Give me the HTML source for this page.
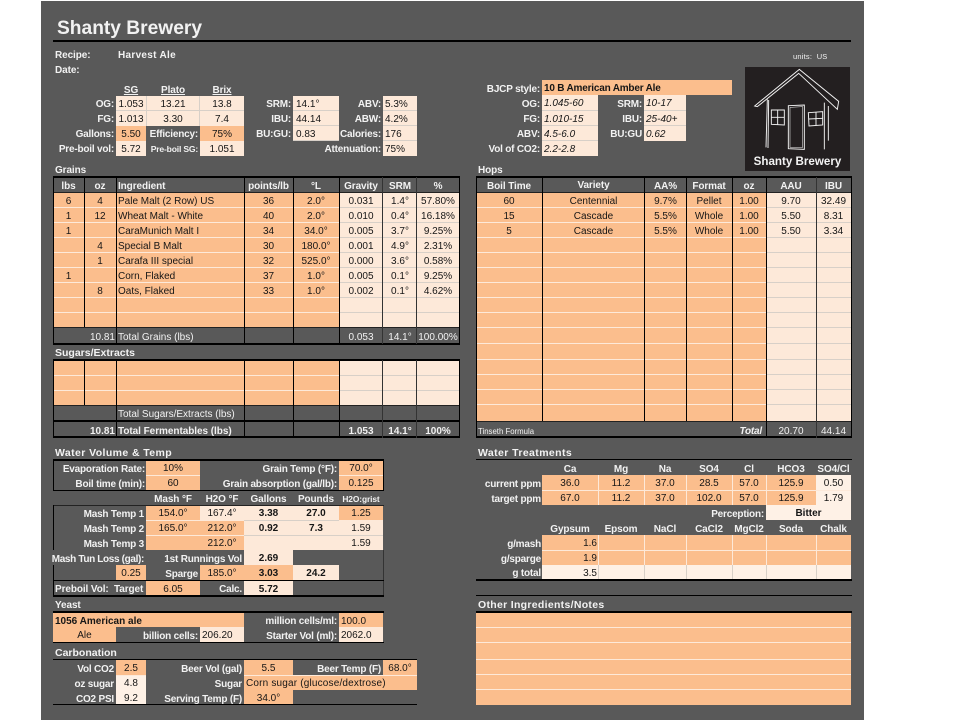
<!DOCTYPE html>
<html><head><meta charset="utf-8"><title>Shanty Brewery</title>
<style>
html,body{margin:0;padding:0;background:#fff;width:960px;height:720px;overflow:hidden}
#g{position:absolute;left:41px;top:1px;width:823px;height:719px;background:#595959}
#a{position:absolute;left:0;top:0;width:960px;height:720px;font:10px/15px "Liberation Sans",sans-serif;color:#161616}
#a p{position:absolute;margin:0;padding:1px 0 0;height:15px;line-height:15px;text-align:center;white-space:nowrap;box-sizing:border-box}
#a p.o{background:#fbbe8d}
#a p.l{background:#fde9d9}
#a p.x{background:#fef1e6}
#a p.w{left:0;text-align:right;color:#f2f2f2;font-weight:bold;letter-spacing:-.2px}
#a p.t{text-align:left;color:#f2f2f2;font-weight:bold;letter-spacing:-.1px}
#a p.h{text-align:left;color:#f2f2f2;font-weight:bold;font-size:10.5px}
#a p.n{text-align:left}
#a p.v{color:#f2f2f2}
#a p.b{font-weight:bold}
#a p.i{font-style:italic}
#a u{position:absolute;display:block;text-decoration:none;background:#000}
#a u.s{background:#fde9d9;height:1px}
#a u.q{background:#d8d0c8}
</style></head><body>
<div id="g"></div>
<div id="a">

<!-- Header -->
<p class="h" style="left:57px;top:16px;height:24px;line-height:24px;font-size:19.2px">Shanty Brewery</p>
<u style="left:53px;top:40px;width:798px;height:2px"></u>
<p class="t" style="left:55px;top:47px">Recipe:</p>
<p class="t" style="left:118px;top:47px;letter-spacing:.3px">Harvest Ale</p>
<p class="t" style="left:55px;top:62px">Date:</p>
<p class="v" style="left:793px;top:48px;font-size:7.5px;text-align:left;letter-spacing:.2px">units:&nbsp; US</p>

<!-- Top stats -->
<p class="t" style="left:116px;top:82px;width:30px;text-align:center;text-decoration:underline">SG</p>
<p class="t" style="left:146px;top:82px;width:54px;text-align:center;text-decoration:underline">Plato</p>
<p class="t" style="left:200px;top:82px;width:44px;text-align:center;text-decoration:underline">Brix</p>

<p class="w" style="top:96px;width:114px">OG:</p>
<p class="w" style="top:111px;width:114px">FG:</p>
<p class="w" style="top:126px;width:114px">Gallons:</p>
<p class="w" style="top:141px;width:114px">Pre-boil vol:</p>
<p class="l" style="left:116px;top:96px;width:30px">1.053</p>
<p class="l" style="left:146px;top:96px;width:54px">13.21</p>
<p class="l" style="left:200px;top:96px;width:44px">13.8</p>
<p class="l" style="left:116px;top:111px;width:30px">1.013</p>
<p class="l" style="left:146px;top:111px;width:54px">3.30</p>
<p class="l" style="left:200px;top:111px;width:44px">7.4</p>
<p class="o" style="left:116px;top:126px;width:30px">5.50</p>
<p class="w" style="top:126px;width:198px">Efficiency:</p>
<p class="o" style="left:200px;top:126px;width:44px">75%</p>
<p class="l" style="left:116px;top:141px;width:30px">5.72</p>
<p class="w" style="top:141px;width:198px;font-size:8.6px">Pre-boil SG:</p>
<p class="l" style="left:200px;top:141px;width:44px">1.051</p>
<u class="q" style="left:116px;top:110px;width:128px;height:1px"></u>
<u class="q" style="left:199px;top:96px;width:1px;height:30px"></u>
<u class="q" style="left:146px;top:96px;width:1px;height:30px"></u>

<p class="w" style="top:96px;width:291px">SRM:</p>
<p class="w" style="top:111px;width:291px">IBU:</p>
<p class="w" style="top:126px;width:291px">BU:GU:</p>
<p class="l n" style="left:293px;top:96px;width:46px;padding-left:3px">14.1°</p>
<p class="l n" style="left:293px;top:111px;width:46px;padding-left:3px">44.14</p>
<p class="l n" style="left:293px;top:126px;width:46px;padding-left:3px">0.83</p>
<u class="q" style="left:293px;top:110px;width:46px;height:1px"></u>
<u class="q" style="left:293px;top:125px;width:46px;height:1px"></u>
<u class="q" style="left:293px;top:140px;width:46px;height:1px"></u>

<p class="w" style="top:96px;width:381px">ABV:</p>
<p class="w" style="top:111px;width:381px">ABW:</p>
<p class="w" style="top:126px;width:381px">Calories:</p>
<p class="w" style="top:141px;width:381px">Attenuation:</p>
<p class="l n" style="left:383px;top:96px;width:34px;padding-left:2px">5.3%</p>
<p class="l n" style="left:383px;top:111px;width:34px;padding-left:2px">4.2%</p>
<p class="l n" style="left:383px;top:126px;width:34px;padding-left:2px">176</p>
<p class="l n" style="left:383px;top:141px;width:34px;padding-left:2px">75%</p>
<u class="q" style="left:383px;top:110px;width:34px;height:1px"></u>
<u class="q" style="left:383px;top:125px;width:34px;height:1px"></u>
<u class="q" style="left:383px;top:140px;width:34px;height:1px"></u>

<!-- BJCP -->
<p class="w" style="top:81px;width:540px">BJCP style:</p>
<p class="o n b" style="left:542px;top:80px;width:190px;padding-left:2px;letter-spacing:-.2px">10 B American Amber Ale</p>
<p class="w" style="top:96px;width:540px">OG:</p>
<p class="w" style="top:111px;width:540px">FG:</p>
<p class="w" style="top:126px;width:540px">ABV:</p>
<p class="w" style="top:141px;width:540px">Vol of CO2:</p>
<p class="l n i" style="left:542px;top:95px;width:56px;padding-left:2px;height:16px">1.045-60</p>
<p class="l n i" style="left:542px;top:111px;width:56px;padding-left:2px">1.010-15</p>
<p class="l n i" style="left:542px;top:126px;width:56px;padding-left:2px">4.5-6.0</p>
<p class="l n i" style="left:542px;top:141px;width:56px;padding-left:2px">2.2-2.8</p>
<p class="w" style="top:96px;width:642px">SRM:</p>
<p class="w" style="top:111px;width:642px">IBU:</p>
<p class="w" style="top:126px;width:642px">BU:GU</p>
<p class="l n i" style="left:644px;top:95px;width:42px;padding-left:2px;height:16px">10-17</p>
<p class="l n i" style="left:644px;top:111px;width:42px;padding-left:2px">25-40+</p>
<p class="l n i" style="left:644px;top:126px;width:42px;padding-left:2px">0.62</p>
<u class="q" style="left:542px;top:110px;width:56px;height:1px"></u>
<u class="q" style="left:542px;top:125px;width:56px;height:1px"></u>
<u class="q" style="left:542px;top:140px;width:56px;height:1px"></u>
<u class="q" style="left:644px;top:110px;width:42px;height:1px"></u>
<u class="q" style="left:644px;top:125px;width:42px;height:1px"></u>

<!-- Logo -->
<u style="left:745px;top:67px;width:105px;height:104px;background:#231f20"></u>
<svg style="position:absolute;left:740px;top:60px" width="120" height="120" viewBox="0 0 360 360" fill="none" stroke="#f4f4f4" stroke-width="2.8" stroke-linejoin="miter">
<path d="M44 138L178 28L296 124L292 148L176 40L52 140Z"/>
<path d="M82 118L78 262M86 120L84 264"/>
<path d="M253 128L253 268M265 138L265 242"/>
<path d="M145 137L193 135L193 268L145 266Z"/>
<path d="M150 142L188 140L188 262L150 262Z" stroke-width="1.6"/>
<path d="M94 150L133 150L133 195L94 193Z"/>
<path d="M113 150L113 194M94 172L133 172"/>
<path d="M205 158L248 155L248 195L207 198Z"/>
<path d="M228 157L228 196M206 177L248 175"/>
</svg>
<p class="h" style="left:745px;top:153px;width:105px;text-align:center;font-size:11.6px">Shanty Brewery</p>

<!-- Grains -->
<p class="t" style="left:55px;top:162px">Grains</p>
<u style="left:53px;top:193px;width:191px;height:134px;background:#fbbe8d"></u>
<u style="left:244px;top:193px;width:95px;height:134px;background:#fbbe8d"></u>
<u style="left:339px;top:193px;width:120px;height:134px;background:#fde9d9"></u>
<u class="s" style="left:53px;top:207px;width:286px"></u>
<u class="s" style="left:53px;top:222px;width:286px"></u>
<u class="s" style="left:53px;top:237px;width:286px"></u>
<u class="s" style="left:53px;top:252px;width:286px"></u>
<u class="s" style="left:53px;top:267px;width:286px"></u>
<u class="s" style="left:53px;top:282px;width:286px"></u>
<u class="s" style="left:53px;top:297px;width:286px"></u>
<u class="s" style="left:53px;top:312px;width:286px"></u>
<u class="q" style="left:339px;top:207px;width:120px;height:1px"></u>
<u class="q" style="left:339px;top:222px;width:120px;height:1px"></u>
<u class="q" style="left:339px;top:237px;width:120px;height:1px"></u>
<u class="q" style="left:339px;top:252px;width:120px;height:1px"></u>
<u class="q" style="left:339px;top:267px;width:120px;height:1px"></u>
<u class="q" style="left:339px;top:282px;width:120px;height:1px"></u>
<u class="q" style="left:339px;top:297px;width:120px;height:1px"></u>
<u class="q" style="left:339px;top:312px;width:120px;height:1px"></u>
<u style="left:53px;top:176px;width:407px;height:2px"></u>
<u style="left:53px;top:192px;width:407px;height:1px;background:#222"></u>
<u style="left:53px;top:327px;width:407px;height:1px;background:#222"></u>
<u style="left:53px;top:343px;width:407px;height:2px"></u>
<u style="left:53px;top:176px;width:1px;height:169px"></u>
<u style="left:84px;top:177px;width:1px;height:150px"></u>
<u style="left:116px;top:177px;width:1px;height:167px"></u>
<u style="left:244px;top:177px;width:1px;height:167px"></u>
<u style="left:293px;top:177px;width:1px;height:167px"></u>
<u style="left:339px;top:177px;width:1px;height:167px"></u>
<u style="left:382px;top:177px;width:1px;height:167px;background:#333"></u>
<u style="left:416px;top:177px;width:1px;height:167px;background:#333"></u>
<u style="left:459px;top:176px;width:1px;height:169px"></u>

<p class="t" style="left:53px;top:178px;width:31px;text-align:center">lbs</p>
<p class="t" style="left:84px;top:178px;width:32px;text-align:center">oz</p>
<p class="t" style="left:118px;top:178px">Ingredient</p>
<p class="t" style="left:244px;top:178px;width:49px;text-align:center">points/lb</p>
<p class="t" style="left:293px;top:178px;width:46px;text-align:center">°L</p>
<p class="t" style="left:339px;top:178px;width:44px;text-align:center">Gravity</p>
<p class="t" style="left:383px;top:178px;width:34px;text-align:center">SRM</p>
<p class="t" style="left:417px;top:178px;width:42px;text-align:center">%</p>

<p style="left:53px;top:193px;width:31px">6</p><p style="left:84px;top:193px;width:32px">4</p><p class="n" style="left:118px;top:193px">Pale Malt (2 Row) US</p><p style="left:244px;top:193px;width:49px">36</p><p style="left:293px;top:193px;width:46px">2.0°</p><p style="left:339px;top:193px;width:44px">0.031</p><p style="left:383px;top:193px;width:34px">1.4°</p><p style="left:417px;top:193px;width:42px">57.80%</p>
<p style="left:53px;top:208px;width:31px">1</p><p style="left:84px;top:208px;width:32px">12</p><p class="n" style="left:118px;top:208px">Wheat Malt - White</p><p style="left:244px;top:208px;width:49px">40</p><p style="left:293px;top:208px;width:46px">2.0°</p><p style="left:339px;top:208px;width:44px">0.010</p><p style="left:383px;top:208px;width:34px">0.4°</p><p style="left:417px;top:208px;width:42px">16.18%</p>
<p style="left:53px;top:223px;width:31px">1</p><p class="n" style="left:118px;top:223px">CaraMunich Malt I</p><p style="left:244px;top:223px;width:49px">34</p><p style="left:293px;top:223px;width:46px">34.0°</p><p style="left:339px;top:223px;width:44px">0.005</p><p style="left:383px;top:223px;width:34px">3.7°</p><p style="left:417px;top:223px;width:42px">9.25%</p>
<p style="left:84px;top:238px;width:32px">4</p><p class="n" style="left:118px;top:238px">Special B Malt</p><p style="left:244px;top:238px;width:49px">30</p><p style="left:293px;top:238px;width:46px">180.0°</p><p style="left:339px;top:238px;width:44px">0.001</p><p style="left:383px;top:238px;width:34px">4.9°</p><p style="left:417px;top:238px;width:42px">2.31%</p>
<p style="left:84px;top:253px;width:32px">1</p><p class="n" style="left:118px;top:253px">Carafa III special</p><p style="left:244px;top:253px;width:49px">32</p><p style="left:293px;top:253px;width:46px">525.0°</p><p style="left:339px;top:253px;width:44px">0.000</p><p style="left:383px;top:253px;width:34px">3.6°</p><p style="left:417px;top:253px;width:42px">0.58%</p>
<p style="left:53px;top:268px;width:31px">1</p><p class="n" style="left:118px;top:268px">Corn, Flaked</p><p style="left:244px;top:268px;width:49px">37</p><p style="left:293px;top:268px;width:46px">1.0°</p><p style="left:339px;top:268px;width:44px">0.005</p><p style="left:383px;top:268px;width:34px">0.1°</p><p style="left:417px;top:268px;width:42px">9.25%</p>
<p style="left:84px;top:283px;width:32px">8</p><p class="n" style="left:118px;top:283px">Oats, Flaked</p><p style="left:244px;top:283px;width:49px">33</p><p style="left:293px;top:283px;width:46px">1.0°</p><p style="left:339px;top:283px;width:44px">0.002</p><p style="left:383px;top:283px;width:34px">0.1°</p><p style="left:417px;top:283px;width:42px">4.62%</p>

<p class="v" style="left:84px;top:329px;width:31px;text-align:right">10.81</p>
<p class="v n" style="left:118px;top:329px">Total Grains (lbs)</p>
<p class="v" style="left:339px;top:329px;width:44px">0.053</p>
<p class="v" style="left:383px;top:329px;width:34px">14.1°</p>
<p class="v" style="left:417px;top:329px;width:42px">100.00%</p>

<!-- Sugars -->
<p class="h" style="left:55px;top:345px">Sugars/Extracts</p>
<u style="left:53px;top:360px;width:286px;height:45px;background:#fbbe8d"></u>
<u style="left:339px;top:360px;width:120px;height:45px;background:#fde9d9"></u>
<u class="s" style="left:53px;top:375px;width:286px"></u>
<u class="s" style="left:53px;top:390px;width:286px"></u>
<u class="q" style="left:339px;top:375px;width:120px;height:1px"></u>
<u class="q" style="left:339px;top:390px;width:120px;height:1px"></u>
<u style="left:53px;top:359px;width:407px;height:2px"></u>
<u style="left:53px;top:405px;width:407px;height:1px;background:#222"></u>
<u style="left:53px;top:420px;width:407px;height:2px"></u>
<u style="left:53px;top:436px;width:407px;height:2px"></u>
<u style="left:53px;top:359px;width:1px;height:79px"></u>
<u style="left:84px;top:360px;width:1px;height:45px"></u>
<u style="left:116px;top:360px;width:1px;height:78px"></u>
<u style="left:244px;top:360px;width:1px;height:78px"></u>
<u style="left:293px;top:360px;width:1px;height:78px"></u>
<u style="left:339px;top:360px;width:1px;height:78px"></u>
<u style="left:382px;top:360px;width:1px;height:78px;background:#333"></u>
<u style="left:416px;top:360px;width:1px;height:78px;background:#333"></u>
<u style="left:459px;top:359px;width:1px;height:79px"></u>
<p class="v n" style="left:118px;top:406px">Total Sugars/Extracts (lbs)</p>
<p class="v b" style="left:84px;top:423px;width:31px;text-align:right">10.81</p>
<p class="v b n" style="left:118px;top:423px;letter-spacing:-.05px">Total Fermentables (lbs)</p>
<p class="v b" style="left:339px;top:423px;width:44px">1.053</p>
<p class="v b" style="left:383px;top:423px;width:34px">14.1°</p>
<p class="v b" style="left:417px;top:423px;width:42px">100%</p>

<!-- Water Volume -->
<p class="h" style="left:55px;top:445px;letter-spacing:.4px">Water Volume &amp; Temp</p>
<p class="o" style="left:146px;top:460px;width:54px">10%</p>
<p class="o" style="left:146px;top:475px;width:54px">60</p>
<p class="o" style="left:339px;top:460px;width:44px">70.0°</p>
<p class="o" style="left:339px;top:475px;width:44px">0.125</p>
<u class="s" style="left:146px;top:475px;width:54px"></u>
<u class="s" style="left:339px;top:475px;width:44px"></u>
<u style="left:53px;top:459px;width:331px;height:2px"></u>
<u style="left:53px;top:490px;width:331px;height:1px"></u>
<u style="left:53px;top:459px;width:1px;height:32px"></u>
<u style="left:383px;top:459px;width:1px;height:32px"></u>
<p class="w" style="top:461px;width:145px">Evaporation Rate:</p>
<p class="w" style="top:476px;width:145px">Boil time (min):</p>
<p class="w" style="top:461px;width:337px">Grain Temp (°F):</p>
<p class="w" style="top:476px;width:337px">Grain absorption (gal/lb):</p>

<p class="t" style="left:146px;top:491px;width:54px;text-align:center">Mash °F</p>
<p class="t" style="left:200px;top:491px;width:44px;text-align:center">H2O °F</p>
<p class="t" style="left:244px;top:491px;width:49px;text-align:center">Gallons</p>
<p class="t" style="left:293px;top:491px;width:46px;text-align:center">Pounds</p>
<p class="t" style="left:339px;top:491px;width:44px;text-align:center;font-size:8.4px">H2O:grist</p>

<p class="o" style="left:146px;top:505px;width:54px">154.0°</p>
<p class="l" style="left:200px;top:505px;width:44px">167.4°</p>
<p class="l b" style="left:244px;top:505px;width:49px">3.38</p>
<p class="l b" style="left:293px;top:505px;width:46px">27.0</p>
<p class="o" style="left:339px;top:505px;width:44px">1.25</p>
<p class="o" style="left:146px;top:520px;width:54px">165.0°</p>
<p class="o" style="left:200px;top:520px;width:44px">212.0°</p>
<p class="l b" style="left:244px;top:520px;width:49px">0.92</p>
<p class="l b" style="left:293px;top:520px;width:46px">7.3</p>
<p class="l" style="left:339px;top:520px;width:44px">1.59</p>
<p class="o" style="left:146px;top:535px;width:54px"></p>
<p class="o" style="left:200px;top:535px;width:44px">212.0°</p>
<p class="l" style="left:244px;top:535px;width:49px"></p>
<p class="l" style="left:293px;top:535px;width:46px"></p>
<p class="l" style="left:339px;top:535px;width:44px">1.59</p>
<u class="s" style="left:146px;top:520px;width:98px"></u>
<u class="s" style="left:146px;top:535px;width:98px"></u>
<u class="q" style="left:244px;top:520px;width:95px;height:1px"></u>
<u class="q" style="left:244px;top:535px;width:95px;height:1px"></u>
<u class="q" style="left:339px;top:535px;width:44px;height:1px"></u>
<u style="left:53px;top:505px;width:331px;height:1px;background:#222"></u>
<u style="left:53px;top:505px;width:1px;height:45px"></u>
<p class="w" style="top:506px;width:144px">Mash Temp 1</p>
<p class="w" style="top:521px;width:144px">Mash Temp 2</p>
<p class="w" style="top:536px;width:144px">Mash Temp 3</p>

<p class="w" style="top:551px;width:144px;letter-spacing:-.35px">Mash Tun Loss (gal):</p>
<p class="w" style="top:551px;width:242px">1st Runnings Vol</p>
<p class="l b" style="left:244px;top:550px;width:49px">2.69</p>
<p class="o" style="left:116px;top:565px;width:30px">0.25</p>
<p class="w" style="top:566px;width:198px">Sparge</p>
<p class="o" style="left:200px;top:565px;width:44px">185.0°</p>
<p class="o b" style="left:244px;top:565px;width:49px">3.03</p>
<p class="l b" style="left:293px;top:565px;width:46px">24.2</p>
<u style="left:53px;top:565px;width:1px;height:31px"></u>
<u style="left:383px;top:550px;width:1px;height:46px;background:#333"></u>
<u style="left:53px;top:580px;width:331px;height:1px"></u>
<p class="t" style="left:55px;top:581px">Preboil Vol:&nbsp; Target</p>
<p class="o" style="left:146px;top:581px;width:54px;height:14px">6.05</p>
<p class="w" style="top:581px;width:242px">Calc.</p>
<p class="l b" style="left:244px;top:581px;width:49px;height:14px">5.72</p>
<u style="left:53px;top:595px;width:331px;height:2px"></u>

<!-- Yeast -->
<p class="t" style="left:55px;top:597px">Yeast</p>
<u style="left:53px;top:611px;width:331px;height:2px"></u>
<p class="o n b" style="left:53px;top:613px;width:191px;padding-left:2px;height:14px">1056 American ale</p>
<p class="w" style="top:613px;width:337px">million cells/ml:</p>
<p class="o n" style="left:339px;top:613px;width:44px;padding-left:2px;height:14px">100.0</p>
<p class="o" style="left:53px;top:627px;width:63px">Ale</p>
<p class="w" style="top:628px;width:198px">billion cells:</p>
<p class="l n" style="left:200px;top:627px;width:44px;padding-left:2px">206.20</p>
<p class="w" style="top:628px;width:337px">Starter Vol (ml):</p>
<p class="l n" style="left:339px;top:627px;width:44px;padding-left:2px">2062.0</p>
<u style="left:53px;top:642px;width:331px;height:1px"></u>

<!-- Carbonation -->
<p class="h" style="left:55px;top:645px">Carbonation</p>
<u style="left:53px;top:659px;width:364px;height:1px"></u>
<p class="w" style="top:661px;width:114px">Vol CO2</p>
<p class="o" style="left:116px;top:660px;width:30px">2.5</p>
<p class="w" style="top:661px;width:242px">Beer Vol (gal)</p>
<p class="o" style="left:244px;top:660px;width:49px">5.5</p>
<p class="w" style="top:661px;width:381px">Beer Temp (F)</p>
<p class="o" style="left:383px;top:660px;width:34px">68.0°</p>
<p class="w" style="top:676px;width:114px">oz sugar</p>
<p class="x" style="left:116px;top:675px;width:30px">4.8</p>
<p class="w" style="top:676px;width:242px">Sugar</p>
<p class="o n" style="left:244px;top:675px;width:173px;padding-left:2px;letter-spacing:.18px">Corn sugar (glucose/dextrose)</p>
<p class="w" style="top:691px;width:114px">CO2 PSI</p>
<p class="x" style="left:116px;top:690px;width:30px;height:14px">9.2</p>
<p class="w" style="top:691px;width:242px">Serving Temp (F)</p>
<p class="o" style="left:244px;top:690px;width:49px;height:14px">34.0°</p>
<u class="s" style="left:116px;top:675px;width:30px"></u>
<u class="s" style="left:244px;top:675px;width:173px"></u>
<u style="left:53px;top:704px;width:364px;height:1px"></u>

<!-- Hops -->
<p class="t" style="left:478px;top:162px">Hops</p>
<u style="left:476px;top:193px;width:290px;height:228px;background:#fbbe8d"></u>
<u style="left:766px;top:193px;width:85px;height:228px;background:#fde9d9"></u>
<u class="s" style="left:476px;top:207px;width:290px"></u>
<u class="s" style="left:476px;top:222px;width:290px"></u>
<u class="s" style="left:476px;top:237px;width:290px"></u>
<u class="s" style="left:476px;top:252px;width:290px"></u>
<u class="s" style="left:476px;top:267px;width:290px"></u>
<u class="s" style="left:476px;top:282px;width:290px"></u>
<u class="s" style="left:476px;top:297px;width:290px"></u>
<u class="s" style="left:476px;top:312px;width:290px"></u>
<u class="s" style="left:476px;top:327px;width:290px"></u>
<u class="s" style="left:476px;top:343px;width:290px"></u>
<u class="s" style="left:476px;top:359px;width:290px"></u>
<u class="s" style="left:476px;top:374px;width:290px"></u>
<u class="s" style="left:476px;top:389px;width:290px"></u>
<u class="s" style="left:476px;top:404px;width:290px"></u>
<u class="q" style="left:766px;top:207px;width:85px;height:1px"></u>
<u class="q" style="left:766px;top:222px;width:85px;height:1px"></u>
<u class="q" style="left:766px;top:237px;width:85px;height:1px"></u>
<u class="q" style="left:766px;top:252px;width:85px;height:1px"></u>
<u class="q" style="left:766px;top:267px;width:85px;height:1px"></u>
<u class="q" style="left:766px;top:282px;width:85px;height:1px"></u>
<u class="q" style="left:766px;top:297px;width:85px;height:1px"></u>
<u class="q" style="left:766px;top:312px;width:85px;height:1px"></u>
<u class="q" style="left:766px;top:327px;width:85px;height:1px"></u>
<u class="q" style="left:766px;top:343px;width:85px;height:1px"></u>
<u class="q" style="left:766px;top:359px;width:85px;height:1px"></u>
<u class="q" style="left:766px;top:374px;width:85px;height:1px"></u>
<u class="q" style="left:766px;top:389px;width:85px;height:1px"></u>
<u class="q" style="left:766px;top:404px;width:85px;height:1px"></u>
<u style="left:476px;top:176px;width:376px;height:2px"></u>
<u style="left:476px;top:192px;width:376px;height:1px;background:#222"></u>
<u style="left:476px;top:421px;width:376px;height:1px;background:#222"></u>
<u style="left:476px;top:436px;width:376px;height:2px"></u>
<u style="left:476px;top:176px;width:1px;height:262px"></u>
<u style="left:542px;top:177px;width:1px;height:244px"></u>
<u style="left:644px;top:177px;width:1px;height:244px"></u>
<u style="left:686px;top:177px;width:1px;height:244px"></u>
<u style="left:732px;top:177px;width:1px;height:244px"></u>
<u style="left:766px;top:177px;width:1px;height:261px"></u>
<u style="left:816px;top:177px;width:1px;height:261px;background:#333"></u>
<u style="left:851px;top:176px;width:1px;height:262px"></u>

<p class="t" style="left:476px;top:178px;width:66px;text-align:center">Boil Time</p>
<p class="t" style="left:542px;top:177px;width:103px;text-align:center">Variety</p>
<p class="t" style="left:645px;top:178px;width:41px;text-align:center">AA%</p>
<p class="t" style="left:686px;top:178px;width:46px;text-align:center">Format</p>
<p class="t" style="left:732px;top:178px;width:34px;text-align:center">oz</p>
<p class="t" style="left:766px;top:178px;width:50px;text-align:center">AAU</p>
<p class="t" style="left:816px;top:178px;width:35px;text-align:center">IBU</p>

<p style="left:476px;top:193px;width:66px">60</p><p style="left:542px;top:193px;width:103px">Centennial</p><p style="left:645px;top:193px;width:41px">9.7%</p><p style="left:686px;top:193px;width:46px">Pellet</p><p style="left:732px;top:193px;width:34px">1.00</p><p style="left:766px;top:193px;width:50px">9.70</p><p style="left:816px;top:193px;width:35px">32.49</p>
<p style="left:476px;top:208px;width:66px">15</p><p style="left:542px;top:208px;width:103px">Cascade</p><p style="left:645px;top:208px;width:41px">5.5%</p><p style="left:686px;top:208px;width:46px">Whole</p><p style="left:732px;top:208px;width:34px">1.00</p><p style="left:766px;top:208px;width:50px">5.50</p><p style="left:816px;top:208px;width:35px">8.31</p>
<p style="left:476px;top:223px;width:66px">5</p><p style="left:542px;top:223px;width:103px">Cascade</p><p style="left:645px;top:223px;width:41px">5.5%</p><p style="left:686px;top:223px;width:46px">Whole</p><p style="left:732px;top:223px;width:34px">1.00</p><p style="left:766px;top:223px;width:50px">5.50</p><p style="left:816px;top:223px;width:35px">3.34</p>

<p class="v n" style="left:478px;top:423px;font-size:7.8px">Tinseth Formula</p>
<p class="w i" style="top:423px;width:762px">Total</p>
<p class="v" style="left:766px;top:423px;width:50px">20.70</p>
<p class="v" style="left:816px;top:423px;width:35px">44.14</p>

<!-- Water Treatments -->
<p class="h" style="left:478px;top:445px;letter-spacing:.4px">Water Treatments</p>
<u style="left:476px;top:459px;width:376px;height:1px"></u>
<p class="t" style="left:542px;top:461px;width:56px;text-align:center">Ca</p>
<p class="t" style="left:598px;top:461px;width:46px;text-align:center">Mg</p>
<p class="t" style="left:644px;top:461px;width:42px;text-align:center">Na</p>
<p class="t" style="left:686px;top:461px;width:46px;text-align:center">SO4</p>
<p class="t" style="left:732px;top:461px;width:34px;text-align:center">Cl</p>
<p class="t" style="left:766px;top:461px;width:50px;text-align:center">HCO3</p>
<p class="t" style="left:816px;top:461px;width:35px;text-align:center">SO4/Cl</p>
<p class="w" style="top:476px;width:541px">current ppm</p>
<p class="w" style="top:491px;width:541px">target ppm</p>
<p class="o" style="left:542px;top:475px;width:56px">36.0</p><p class="o" style="left:598px;top:475px;width:46px">11.2</p><p class="o" style="left:644px;top:475px;width:42px">37.0</p><p class="o" style="left:686px;top:475px;width:46px">28.5</p><p class="o" style="left:732px;top:475px;width:34px">57.0</p><p class="o" style="left:766px;top:475px;width:50px">125.9</p><p class="x" style="left:816px;top:475px;width:35px">0.50</p>
<p class="o" style="left:542px;top:490px;width:56px">67.0</p><p class="o" style="left:598px;top:490px;width:46px">11.2</p><p class="o" style="left:644px;top:490px;width:42px">37.0</p><p class="o" style="left:686px;top:490px;width:46px">102.0</p><p class="o" style="left:732px;top:490px;width:34px">57.0</p><p class="o" style="left:766px;top:490px;width:50px">125.9</p><p class="x" style="left:816px;top:490px;width:35px">1.79</p>
<u class="s" style="left:542px;top:490px;width:309px"></u>
<u class="s" style="left:598px;top:475px;width:1px;height:30px"></u>
<u class="s" style="left:644px;top:475px;width:1px;height:30px"></u>
<u class="s" style="left:686px;top:475px;width:1px;height:30px"></u>
<u class="s" style="left:732px;top:475px;width:1px;height:30px"></u>
<u class="s" style="left:766px;top:475px;width:1px;height:30px"></u>
<p class="w" style="top:506px;width:764px">Perception:</p>
<p class="x b" style="left:766px;top:505px;width:85px">Bitter</p>
<p class="t" style="left:542px;top:521px;width:56px;text-align:center">Gypsum</p>
<p class="t" style="left:598px;top:521px;width:46px;text-align:center">Epsom</p>
<p class="t" style="left:644px;top:521px;width:42px;text-align:center">NaCl</p>
<p class="t" style="left:686px;top:521px;width:46px;text-align:center">CaCl2</p>
<p class="t" style="left:732px;top:521px;width:34px;text-align:center">MgCl2</p>
<p class="t" style="left:766px;top:521px;width:50px;text-align:center">Soda</p>
<p class="t" style="left:816px;top:521px;width:35px;text-align:center">Chalk</p>
<p class="w" style="top:536px;width:541px">g/mash</p>
<p class="w" style="top:551px;width:541px">g/sparge</p>
<p class="w" style="top:565px;width:541px">g total</p>
<u style="left:542px;top:535px;width:309px;height:30px;background:#fbbe8d"></u>
<u style="left:542px;top:565px;width:309px;height:15px;background:#fef1e6"></u>
<u class="s" style="left:542px;top:550px;width:309px"></u>
<u class="s" style="left:598px;top:535px;width:1px;height:30px"></u>
<u class="s" style="left:644px;top:535px;width:1px;height:30px"></u>
<u class="s" style="left:686px;top:535px;width:1px;height:30px"></u>
<u class="s" style="left:732px;top:535px;width:1px;height:30px"></u>
<u class="s" style="left:766px;top:535px;width:1px;height:30px"></u>
<u class="s" style="left:816px;top:535px;width:1px;height:30px"></u>
<u class="q" style="left:598px;top:565px;width:1px;height:15px"></u>
<u class="q" style="left:644px;top:565px;width:1px;height:15px"></u>
<u class="q" style="left:686px;top:565px;width:1px;height:15px"></u>
<u class="q" style="left:732px;top:565px;width:1px;height:15px"></u>
<u class="q" style="left:766px;top:565px;width:1px;height:15px"></u>
<u class="q" style="left:816px;top:565px;width:1px;height:15px"></u>
<p style="left:542px;top:535px;width:55px;text-align:right">1.6</p>
<p style="left:542px;top:550px;width:55px;text-align:right">1.9</p>
<p style="left:542px;top:565px;width:55px;text-align:right">3.5</p>
<u style="left:476px;top:579px;width:376px;height:2px"></u>

<!-- Other -->
<u style="left:476px;top:595px;width:376px;height:1px"></u>
<p class="h" style="left:478px;top:597px;letter-spacing:.3px">Other Ingredients/Notes</p>
<u style="left:476px;top:611px;width:376px;height:2px"></u>
<u style="left:476px;top:613px;width:375px;height:92px;background:#fbbe8d"></u>
<u class="s" style="left:476px;top:627px;width:375px"></u>
<u class="s" style="left:476px;top:642px;width:375px"></u>
<u class="s" style="left:476px;top:659px;width:375px"></u>
<u class="s" style="left:476px;top:674px;width:375px"></u>
<u class="s" style="left:476px;top:689px;width:375px"></u>

</div>
</body></html>
